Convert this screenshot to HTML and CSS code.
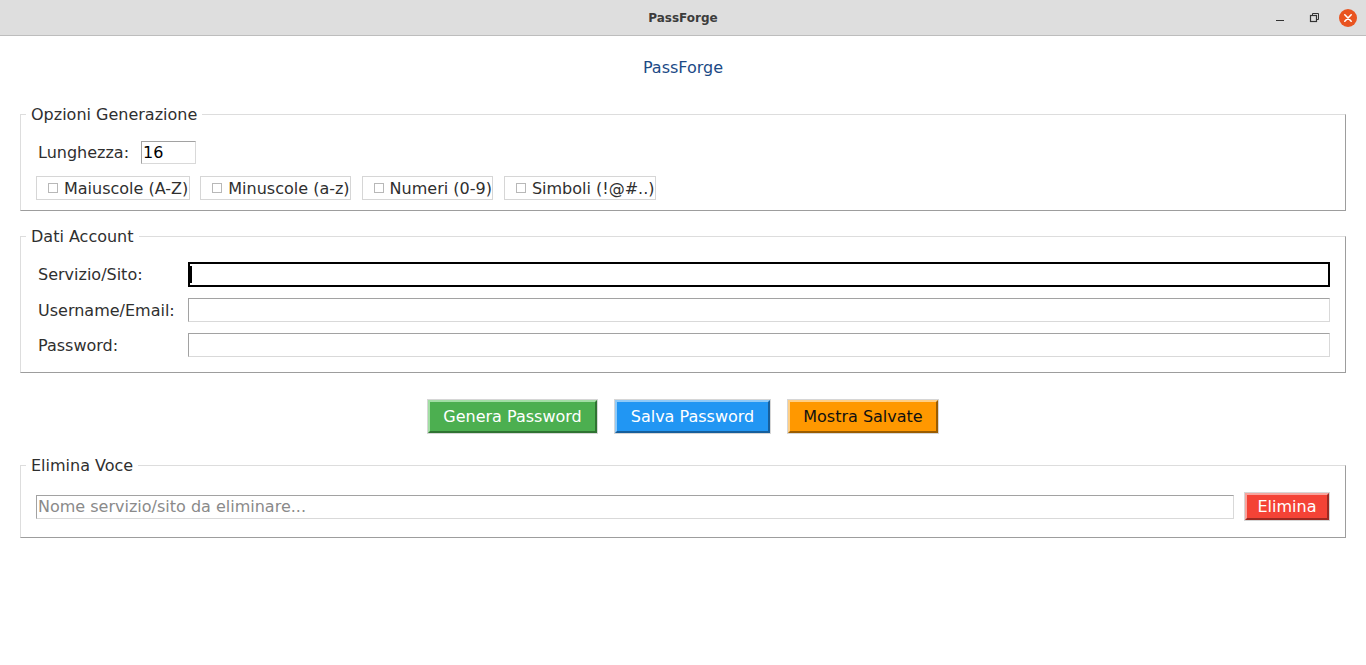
FILE: index.html
```html
<!DOCTYPE html>
<html lang="it">
<head>
<meta charset="utf-8">
<title>PassForge</title>
<link rel="stylesheet" href="styles.css">
</head>
<body>
<div class="window">
  <header class="titlebar">
    <div class="titlebar-spacer"></div>
    <div class="title">PassForge</div>
    <div class="controls">
      <svg class="ctl" width="20" height="20" viewBox="0 0 20 20"><line x1="6" y1="12.5" x2="14" y2="12.5" stroke="#333" stroke-width="1"/></svg>
      <svg class="ctl" width="20" height="20" viewBox="0 0 20 20"><rect x="6.5" y="7.5" width="6" height="6" fill="none" stroke="#333" stroke-width="1.2"/><polyline points="8.5,7.5 8.5,5.5 14.5,5.5 14.5,11.5 12.5,11.5" fill="none" stroke="#333" stroke-width="1"/></svg>
      <svg class="ctl" width="20" height="20" viewBox="0 0 20 20"><circle cx="10" cy="10" r="9" fill="#e95420"/><path d="M6.8 6.8 L13.2 13.2 M13.2 6.8 L6.8 13.2" stroke="#fff" stroke-width="1.6" stroke-linecap="round"/></svg>
    </div>
  </header>

  <main class="app">
    <h1 class="app-title">PassForge</h1>

    <fieldset class="group group-options">
      <legend class="group-legend">Opzioni Generazione</legend>
      <div class="length-row">
        <span class="lbl lbl-len">Lunghezza:</span>
        <div class="entry entry-small">16</div>
      </div>
      <div class="check-row">
        <label class="check"><span class="box"></span>Maiuscole (A-Z)</label>
        <label class="check"><span class="box"></span>Minuscole (a-z)</label>
        <label class="check"><span class="box"></span>Numeri (0-9)</label>
        <label class="check"><span class="box"></span>Simboli (!@#..)</label>
      </div>
    </fieldset>

    <fieldset class="group group-account">
      <legend class="group-legend">Dati Account</legend>
      <div class="form-grid">
        <span class="lbl">Servizio/Sito:</span>
        <div class="entry entry-focus"><span class="caret"></span></div>
        <span class="lbl">Username/Email:</span>
        <div class="entry"></div>
        <span class="lbl">Password:</span>
        <div class="entry"></div>
      </div>
    </fieldset>

    <div class="actions">
      <button class="btn btn-green">Genera Password</button>
      <button class="btn btn-blue">Salva Password</button>
      <button class="btn btn-orange">Mostra Salvate</button>
    </div>

    <fieldset class="group group-delete">
      <legend class="group-legend">Elimina Voce</legend>
      <div class="delete-row">
        <div class="entry entry-grow"><span class="placeholder">Nome servizio/sito da eliminare...</span></div>
        <button class="btn btn-red">Elimina</button>
      </div>
    </fieldset>
  </main>
</div>
</body>
</html>
```

FILE: styles.css
```css
* { box-sizing: border-box; }

body {
  margin: 0;
  background: #ffffff;
  font-family: "DejaVu Sans", "Liberation Sans", sans-serif;
  font-size: 16px;
  color: #2f2f2f;
}

/* title bar */
.titlebar {
  height: 36px;
  background: #dedede;
  border-bottom: 1px solid #bdbdbd;
  display: grid;
  grid-template-columns: 1fr auto 1fr;
  align-items: center;
}
.title {
  font-weight: bold;
  font-size: 12px;
  color: #3c3c3c;
}
.controls {
  justify-self: end;
  display: flex;
  align-items: center;
  gap: 14px;
  padding-right: 8px;
}
.ctl { display: block; }

/* app */
.app-title {
  margin: 22px 0 0;
  font-size: 16px;
  font-weight: normal;
  line-height: 19px;
  text-align: center;
  color: #1b4a86;
}

.group {
  margin: 0 20px;
  min-width: 0;
  border: 1px solid;
  border-color: #dddddd #9d9d9d #9d9d9d #dddddd;
}
.group-legend {
  font-size: 16px;
  line-height: 19px;
  padding: 0 5px;
  margin-left: -10px;
  color: #2f2f2f;
}

.group-options {
  margin-top: 28px;
  padding: 17px 15px 10px;
}
.length-row {
  display: flex;
  align-items: center;
  height: 23px;
}
.lbl {
  padding: 0 2px;
  line-height: 19px;
}
.lbl-len { margin-right: 10px; }

.entry {
  height: 24px;
  border: 1px solid;
  border-color: #a2a2a2 #d9d9d9 #d9d9d9 #a2a2a2;
  background: #ffffff;
  padding-left: 1px;
  display: flex;
  align-items: center;
  line-height: 19px;
  color: #000000;
}
.entry-small {
  width: 55px;
  height: 23px;
}
.entry-focus {
  height: 25px;
  border: 2px solid #000000;
  padding-left: 0;
}
.caret {
  width: 2px;
  height: 17px;
  background: #000000;
}
.placeholder { color: #8a8a8a; }

.check-row {
  display: flex;
  gap: 10.5px;
  margin-top: 12px;
}
.check {
  display: flex;
  align-items: center;
  height: 24px;
  border: 1px solid #d6d6d6;
  padding: 0 0.5px 0 11px;
  line-height: 19px;
}
.box {
  width: 10px;
  height: 10px;
  border: 1px solid #b8b8b8;
  margin-right: 6px;
  background: #ffffff;
}

.group-account {
  margin-top: 16px;
  padding: 16px 15px 15px;
}
.form-grid {
  display: grid;
  grid-template-columns: 152px 1fr;
  row-gap: 11px;
  align-items: center;
}

/* buttons */
.actions {
  display: flex;
  justify-content: center;
  gap: 18px;
  margin-top: 27px;
}
.btn {
  font-family: "DejaVu Sans", "Liberation Sans", sans-serif;
  font-size: 16px;
  line-height: 19px;
  height: 33px;
  padding: 0 13.5px;
  border: 2px solid;
  box-shadow: 0 0 0 1px #d6d6d6;
  color: #ffffff;
  white-space: nowrap;
}
.btn-green {
  background: #4caf50;
  border-color: #a2dea4 #2f7332 #2f7332 #a2dea4;
}
.btn-blue {
  background: #2196f3;
  border-color: #8fcaf8 #175f9c #175f9c #8fcaf8;
}
.btn-orange {
  background: #ff9800;
  color: #111111;
  border-color: #ffcf85 #9a5c00 #9a5c00 #ffcf85;
}
.btn-red {
  background: #f44336;
  border-color: #f9a39c #9c2a22 #9c2a22 #f9a39c;
  width: 84px;
  height: 27px;
  padding: 0;
  margin: 1px 1px 1px 11px;
}

.group-delete {
  margin-top: 23px;
  padding: 17px 15px 16px;
}
.delete-row {
  display: flex;
  align-items: center;
}
.entry-grow { flex: 1; }
```
